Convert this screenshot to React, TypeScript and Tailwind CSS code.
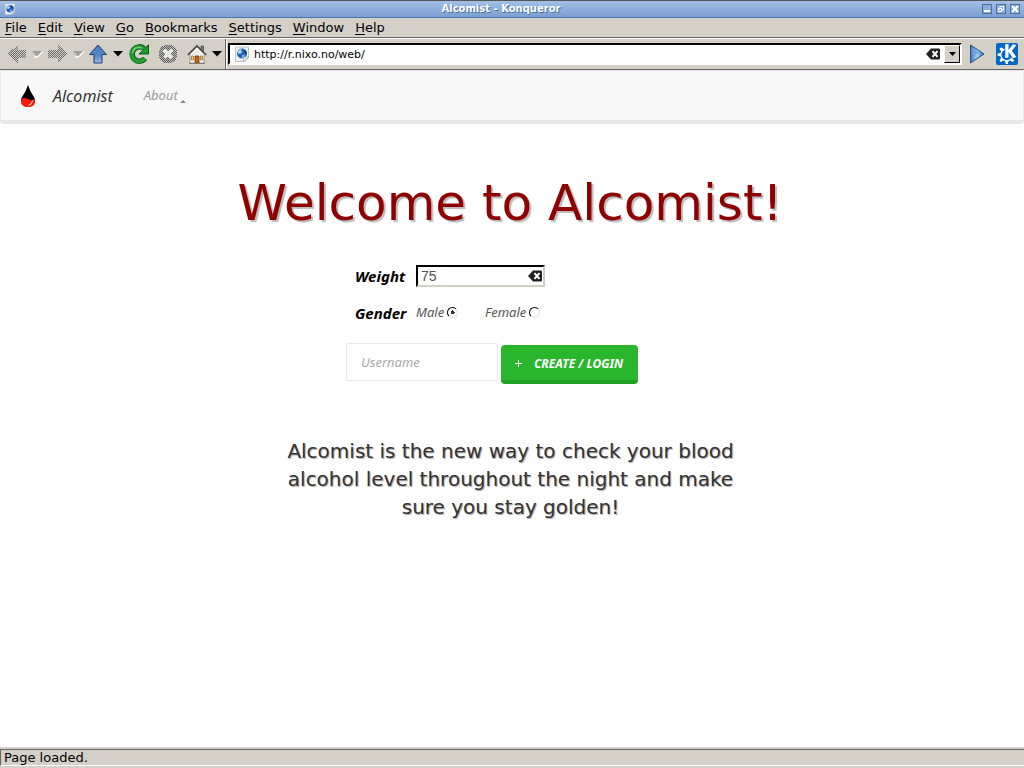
import { useState, type ReactNode } from 'react';
import { SiKde } from 'react-icons/si';

const menus = ['File', 'Edit', 'View', 'Go', 'Bookmarks', 'Settings', 'Window', 'Help'];

function PageIcon({ className }: { className: string }) {
  return (
    <svg viewBox="0 0 16 16" className={className} aria-hidden="true">
      <path d="M1.500 1h13v10.500l-4 4h-9z" fill="#eef1f5" stroke="#a9b2be" strokeWidth=".8" />
      <circle cx="8" cy="7.500" r="5" fill="#2360b4" />
      <path d="M3.500 5.500Q5 2.600 8 3l-1 2 1.500 1L6 8 4 7.500z" fill="#a8cff4" />
      <path d="M10 3.500l2.500 2.200.3 2-2-1z" fill="#12386f" />
      <path d="M8 9l3-.5-1 3-2 .8z" fill="#7bb0e8" />
      <path d="M9.500 15.500l.5-4.500 4.500 0z" fill="#fff" stroke="#8290a3" strokeWidth=".6" />
    </svg>
  );
}

function DisabledArrow({ flip }: { flip?: boolean }) {
  const id = flip ? 'dither-forward' : 'dither-back';
  return (
    <svg viewBox="0 0 20 20" className="h-5 w-5" aria-hidden="true" shapeRendering="crispEdges">
      <defs>
        <pattern id={id} width="2" height="2" patternUnits="userSpaceOnUse">
          <rect width="1" height="1" fill="#6b6b6b" />
          <rect x="1" y="1" width="1" height="1" fill="#6b6b6b" />
          <rect x="1" width="1" height="1" fill="#d4d0c8" />
          <rect y="1" width="1" height="1" fill="#d4d0c8" />
        </pattern>
      </defs>
      <path
        d={flip ? 'M20 10L11 1v5H1v8h10v5z' : 'M0 10l11-9v5h8v8h-8v5z'}
        fill={'url(#' + id + ')'}
      />
    </svg>
  );
}

function Caret({ disabled }: { disabled?: boolean }) {
  return (
    <svg viewBox="0 0 11 7" className="h-[7px] w-[11px]" aria-hidden="true">
      {disabled && <path d="M2 6.500L10.500 1 6 6z" fill="#fff" stroke="#fff" />}
      <path d="M0 0h10L5 5.500z" fill={disabled ? '#a0a0a0' : '#000'} />
    </svg>
  );
}

function ClearIcon() {
  return (
    <svg viewBox="0 0 14 12" className="h-3 w-3.5" aria-hidden="true">
      <path d="M0 6L5 .5h8q1 0 1 1v9q0 1-1 1H5z" fill="#222" />
      <path d="M6.500 3.200l5 5.600M11.500 3.200l-5 5.600" stroke="#fff" strokeWidth="2" />
    </svg>
  );
}

function ToolButton({ label, className, children }: { label: string; className: string; children: ReactNode }) {
  return (
    <button type="button" aria-label={label} className={'flex h-6 shrink-0 items-center justify-center ' + className}>
      {children}
    </button>
  );
}

const windowButton = 'h-2.5 w-2.5 border border-[#4a6f9f] bg-[#8badd9]';

function TitleBar() {
  return (
    <header className="flex h-[18px] items-center border-t border-b border-t-[#555] border-b-[#4776b0] bg-linear-to-b from-[#a3bfe6] to-[#7a9fd1] px-1">
      <PageIcon className="h-3 w-3" />
      <h1 className="flex-1 pl-1 text-center font-['DejaVu_Sans',sans-serif] text-[10px] leading-4 font-bold text-white [text-shadow:1px_1px_0_#4d6f9d]">
        Alcomist - Konqueror
      </h1>
      <div className="flex gap-1">
        <button type="button" aria-label="Minimize" className={windowButton}>
          <svg viewBox="0 0 8 8" className="h-2 w-2" aria-hidden="true"><path d="M1 6h6" stroke="#fff" strokeWidth="2" /></svg>
        </button>
        <button type="button" aria-label="Restore" className={windowButton}>
          <svg viewBox="0 0 8 8" className="h-2 w-2" aria-hidden="true"><path d="M3 3V1.500h3.500V5H5M1.500 3.500h3v3h-3z" fill="none" stroke="#fff" /></svg>
        </button>
        <button type="button" aria-label="Close" className={windowButton}>
          <svg viewBox="0 0 8 8" className="h-2 w-2" aria-hidden="true"><path d="M1 1l6 6M7 1L1 7" stroke="#fff" strokeWidth="2" /></svg>
        </button>
      </div>
    </header>
  );
}

function Toolbar() {
  const [url, setUrl] = useState('http://r.nixo.no/web/');
  return (
    <div className="flex h-8 items-center border-t border-b border-t-white border-b-[#666] pr-1.5 pl-[5px]">
      <ToolButton label="Back" className="w-6"><DisabledArrow /></ToolButton>
      <ToolButton label="Back history" className="w-4"><Caret disabled /></ToolButton>
      <ToolButton label="Forward" className="w-6"><DisabledArrow flip /></ToolButton>
      <ToolButton label="Forward history" className="w-[18px]"><Caret disabled /></ToolButton>
      <ToolButton label="Up" className="w-[22px]">
        <svg viewBox="0 0 20 20" className="h-5 w-5" aria-hidden="true">
          <defs>
            <linearGradient id="up" x2="0" y2="1"><stop stopColor="#4d7cc0" /><stop offset=".6" stopColor="#5685c5" /><stop offset="1" stopColor="#9dbfe8" /></linearGradient>
          </defs>
          <path d="M10 1l8.500 9.500h-4.500v8.500h-8v-8.500H1.500z" fill="url(#up)" stroke="#1e3f73" strokeLinejoin="round" />
        </svg>
      </ToolButton>
      <ToolButton label="Up history" className="w-[18px]"><Caret /></ToolButton>
      <ToolButton label="Reload" className="w-6">
        <svg viewBox="0 0 20 20" className="h-5 w-5" aria-hidden="true">
          <path d="M16 14.500A7.200 7.200 0 1 1 15 4.500" fill="none" stroke="#0b5c14" strokeWidth="5.400" />
          <path d="M19.500.8v9.200h-9.500z" fill="#1d9a2a" stroke="#0b5c14" />
          <path d="M16 14.200A7.200 7.200 0 1 1 15.300 5.200" fill="none" stroke="#259b32" strokeWidth="3.800" />
          <path d="M3.500 9A6.500 6.500 0 0 1 13 4" fill="none" stroke="#6fce72" strokeWidth="1.500" />
        </svg>
      </ToolButton>
      <ToolButton label="Stop" className="w-[34px]">
        <svg viewBox="0 0 20 20" className="h-5 w-5" aria-hidden="true" shapeRendering="crispEdges">
          <defs>
            <pattern id="dither-stop" width="2" height="2" patternUnits="userSpaceOnUse">
              <rect width="2" height="2" fill="#bbbab7" />
              <rect width="1" height="1" fill="#606060" />
              <rect x="1" y="1" width="1" height="1" fill="#606060" />
            </pattern>
          </defs>
          <circle cx="10" cy="10" r="9.500" fill="url(#dither-stop)" />
          <path d="M6 6l8 8M14 6l-8 8" stroke="#e9e8e5" strokeWidth="3" />
        </svg>
      </ToolButton>
      <ToolButton label="Home" className="w-6">
        <svg viewBox="0 0 20 20" className="h-5 w-5" aria-hidden="true">
          <path d="M14 2h2.500v5H14z" fill="#777" stroke="#333" strokeWidth=".6" />
          <path d="M3 10l7-7 7 7v9H3z" fill="#fbfaf7" stroke="#77746c" strokeWidth=".7" />
          <path d="M.7 11L10 1.700l9.300 9.300" fill="none" stroke="#464646" strokeWidth="1.400" />
          <path d="M5 10h10M6.500 8h7" stroke="#d0ccc4" strokeWidth=".7" />
          <path d="M8 12h4v7H8z" fill="#bd651d" stroke="#713306" strokeWidth=".8" />
          <path d="M4.500 12h2v4h-2zM13.500 12h2v4h-2z" fill="#f6d45f" stroke="#915a24" strokeWidth=".7" />
          <path d="M2 19.500h16" stroke="#847e70" />
        </svg>
      </ToolButton>
      <ToolButton label="Home history" className="w-4"><Caret /></ToolButton>
      <div className="mr-px h-[30px] w-0.5 shrink-0 border-r border-l border-r-white border-l-[#666]" />
      <form className="flex h-[22px] min-w-0 flex-1 items-center border-2 border-t-black border-r-white border-b-white border-l-black bg-white pl-1" onSubmit={(event) => event.preventDefault()}>
        <PageIcon className="h-4 w-4 shrink-0" />
        <input
          aria-label="Location"
          value={url}
          onChange={(event) => setUrl(event.target.value)}
          className="min-w-0 flex-1 pt-0.5 pl-1 font-['DejaVu_Sans',sans-serif] text-[11px] leading-4 text-black outline-none"
        />
        <button type="button" aria-label="Clear location" onClick={() => setUrl('')} className="mr-1"><ClearIcon /></button>
        <button type="button" aria-label="Location history" className="flex h-[18px] w-4 items-center justify-center border border-t-white border-r-black border-b-black border-l-white bg-[#d4d0c8]">
          <svg viewBox="0 0 7 4" className="h-1 w-[7px]" aria-hidden="true"><path d="M0 0h7L3.500 4z" /></svg>
        </button>
      </form>
      <ToolButton label="Go" className="w-[30px]">
        <svg viewBox="0 0 16 20" className="h-5 w-4" aria-hidden="true">
          <defs><linearGradient id="go"><stop stopColor="#3f74b8" /><stop offset=".5" stopColor="#a6cff0" /><stop offset="1" stopColor="#2f65a9" /></linearGradient></defs>
          <path d="M1.500 1L15 10 1.500 19z" fill="url(#go)" stroke="#234d85" strokeLinejoin="round" />
          <path d="M2.500 3l9 6.500-9 1z" fill="#6a9dd6" opacity=".7" />
        </svg>
      </ToolButton>
      <a href="#kde" aria-label="KDE" className="ml-1 flex h-[22px] w-[22px] shrink-0 items-center justify-center rounded-xs bg-[#0067c5] text-white">
        <SiKde className="h-5 w-5" />
      </a>
    </div>
  );
}

function Navigation() {
  return (
    <nav className="flex h-[54px] items-center rounded-sm border border-b-4 border-[#e7e7e7] bg-[#f8f8f8] pl-5 font-['Noto_Sans',sans-serif] italic">
      <a href="#home" className="flex items-center gap-[18px] text-base text-[#333]">
        <svg viewBox="0 0 14 22" className="h-[22px] w-3.5" aria-hidden="true">
          <path d="M7 0Q9 6 12 10.500 14 13 14 15.500A7 6.500 0 0 1 0 15.500Q0 13 2 10.500 5 6 7 0z" fill="#000" />
          <path d="M.2 14Q3 12 7 14t6.800 0Q15 22 7 22T.2 14z" fill="#f81c08" />
          <path d="M11.500 15.500q0 4-4 4.800" fill="none" stroke="#fff" strokeWidth=".9" />
        </svg>
        Alcomist
      </a>
      <a href="#about" className="ml-[31px] flex items-end gap-0.5 pb-0.5 text-[13px] leading-5 text-[#999]">
        About
        <svg viewBox="0 0 6 3" className="mb-0.5 h-[3px] w-1.5" aria-hidden="true"><path d="M0 3l3-3 3 3z" fill="#888" /></svg>
      </a>
    </nav>
  );
}

const radioStyle = 'mb-0.5 h-[11px] w-[11px] appearance-none rounded-full border border-t-black border-r-[#e4e2de] border-b-[#e4e2de] border-l-black bg-white checked:bg-[radial-gradient(circle,#333_0_2px,white_2px)]';

function SignupForm() {
  const [weight, setWeight] = useState('75');
  return (
    <form className="mx-auto mt-8 w-[332px] font-['Noto_Sans',sans-serif] text-[13px] text-[#555] italic" onSubmit={(event) => event.preventDefault()}>
      <div className="flex items-center pl-[9px]">
        <label htmlFor="weight" className="w-[61px] text-[15px] leading-5 font-bold text-black">Weight</label>
        <div className="flex h-[22px] w-[129px] items-center border-2 border-t-black border-r-[#d4d0c8] border-b-[#d4d0c8] border-l-black bg-white pr-px">
          <input
            id="weight"
            value={weight}
            onChange={(event) => setWeight(event.target.value)}
            className="min-w-0 flex-1 pl-[3px] font-['Liberation_Sans',sans-serif] text-sm leading-4 text-[#555] not-italic outline-none"
          />
          <button type="button" aria-label="Clear weight" onClick={() => setWeight('')}><ClearIcon /></button>
        </div>
      </div>
      <fieldset className="mt-4 flex h-5 items-center pl-[9px]">
        <legend className="float-left w-[61px] text-[15px] leading-5 font-bold text-black">Gender</legend>
        <label className="flex w-[69px] items-center gap-[3px]">
          Male
          <input type="radio" name="gender" defaultChecked className={radioStyle} />
        </label>
        <label className="flex items-center gap-[3px]">
          Female
          <input type="radio" name="gender" className={radioStyle} />
        </label>
      </fieldset>
      <div className="mt-5 flex items-end gap-[3px]">
        <input
          aria-label="Username"
          placeholder="Username"
          className="mb-[3px] h-[38px] w-[152px] rounded-xs border border-[#e7e7e7] bg-white px-3.5 italic outline-none placeholder:text-[#aaa]"
        />
        <button type="submit" className="flex h-[39px] w-[137px] items-center gap-3 rounded-sm border-b-4 border-[#23a127] bg-[#29b62d] px-3.5 pt-0.5 text-xs font-bold whitespace-nowrap text-white italic">
          <svg viewBox="0 0 7 7" className="h-[7px] w-[7px] shrink-0" aria-hidden="true"><path d="M3.500 0v7M0 3.500h7" stroke="#fff" /></svg>
          CREATE / LOGIN
        </button>
      </div>
    </form>
  );
}

export default function App() {
  return (
    <div className="flex min-h-screen flex-col bg-[#d4d0c8] font-['DejaVu_Sans',sans-serif] text-black">
      <TitleBar />
      <div role="menubar" className="flex h-5 items-center gap-[11px] border-b border-[#666] px-[5px] text-[13px] leading-4">
        {menus.map((menu) => (
          <button key={menu} type="button" role="menuitem">
            <span className="underline underline-offset-2">{menu[0]}</span>
            {menu.slice(1)}
          </button>
        ))}
      </div>
      <Toolbar />
      <main className="flex-1 bg-white">
        <Navigation />
        <h2 className="mt-[49px] pr-1 text-center text-[50px] leading-[60px] text-[#8f0000] [text-shadow:2px_2px_1px_#bbb]">
          Welcome to Alcomist!
        </h2>
        <SignupForm />
        <p className="mx-auto mt-[53px] max-w-[480px] pr-[3px] text-center text-xl leading-7 text-[#333] [text-shadow:1px_1px_1px_#aaa]">
          Alcomist is the new way to check your blood alcohol level throughout the night and make sure you stay golden!
        </p>
      </main>
      <footer className="h-[21px] border-t-2 border-[#d4d0c8]">
        <div className="h-[17px] border-t border-b border-l border-t-[#666] border-b-white border-l-[#666] pl-[3px] text-[13px] leading-4">
          Page loaded.
        </div>
      </footer>
    </div>
  );
}
